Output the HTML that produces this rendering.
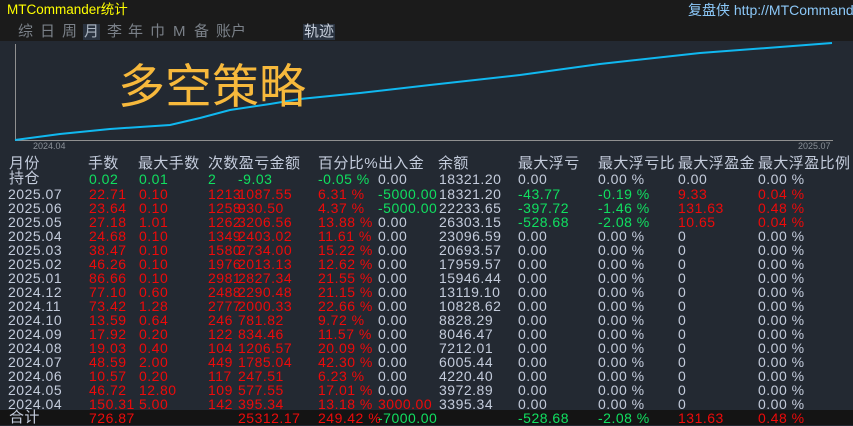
<!DOCTYPE html>
<html><head><meta charset="utf-8"><style>
html,body{margin:0;padding:0}
body{width:853px;height:425px;overflow:hidden;background:#232932;position:relative;font-family:"Liberation Sans","Noto Sans CJK SC",sans-serif;}
#top{position:absolute;left:0;top:0;width:853px;height:41px;background:#1b1b1b;}
.a{position:absolute;white-space:nowrap;}
.r{position:absolute;left:0;width:853px;height:14px;font-size:14px;line-height:14px;letter-spacing:0.5px}
.r span{position:absolute;top:0;white-space:nowrap}
.R{color:#ee0a0a}.G{color:#10e060}.W{color:#c4ccdc}
.h{color:#c4ccdc;font-size:15px;letter-spacing:0.4px}
.t{position:absolute;top:0}
</style></head><body>
<div id="top"></div>
<div class="a" style="left:7px;top:3px;font-size:13.5px;color:#ffff00;line-height:14px">MTCommander统计</div>
<div class="a" style="left:688px;top:3px;font-size:14px;color:#8cc8f8;line-height:14px">复盘侠 http://MTCommander</div>
<div class="a" style="left:0;top:24px;font-size:15px;color:#7a8088;line-height:16px;width:300px;height:16px">
<span class="t" style="left:18px">综</span><span class="t" style="left:40px">日</span><span class="t" style="left:62px">周</span><span class="t" style="left:83px;background:#2a3340;color:#aab4c0;padding:0 1px">月</span><span class="t" style="left:107px">李</span><span class="t" style="left:128px">年</span><span class="t" style="left:150px">巾</span><span class="t" style="left:173px">M</span><span class="t" style="left:194px">备</span><span class="t" style="left:216px">账户</span></div>
<div class="a" style="left:303px;top:24px;font-size:15px;color:#c8d0dc;background:#2a3340;line-height:16px;padding:0 1px">轨迹</div>
<svg class="a" style="left:0;top:41px" width="853" height="110">
<line x1="15.5" y1="3" x2="15.5" y2="100" stroke="#909090" stroke-width="1"/>
<line x1="15" y1="99.5" x2="833" y2="99.5" stroke="#909090" stroke-width="1"/>
<polyline fill="none" stroke="#10b8f0" stroke-width="2" points="15,99 60,93 110,88 170,84 200,77 230,69 270,63 300,58 360,52 430,44 520,34 600,23 700,12 780,6 832,2"/>
<text x="33" y="108" font-size="9" fill="#8a9098" font-family="Liberation Sans">2024.04</text>
<text x="798" y="108" font-size="9" fill="#8a9098" font-family="Liberation Sans">2025.07</text>
</svg>
<div class="a" style="left:118px;top:57px;font-size:47px;line-height:52px;color:#f7b93c;font-family:'Noto Sans CJK SC',sans-serif">多空策略</div>

<div class="r h" style="top:157px"><span style="left:9px">月份</span><span style="left:88px">手数</span><span style="left:138px">最大手数</span><span style="left:208px">次数盈亏金额</span><span style="left:318px">百分比%出入金</span><span style="left:438px">余额</span><span style="left:518px">最大浮亏</span><span style="left:598px">最大浮亏比</span><span style="left:678px">最大浮盈金</span><span style="left:758px">最大浮盈比例</span></div>
<div class="r" style="top:172px"><span class="h" style="left:9px">持仓</span><span class="G" style="left:89px">0.02</span><span class="G" style="left:139px">0.01</span><span class="G" style="left:208px">2</span><span class="G" style="left:238px">-9.03</span><span class="G" style="left:318px">-0.05 %</span><span class="W" style="left:378px">0.00</span><span class="W" style="left:439px">18321.20</span><span class="W" style="left:518px">0.00</span><span class="W" style="left:598px">0.00 %</span><span class="W" style="left:678px">0.00</span><span class="W" style="left:758px">0.00 %</span></div>

<div class="r" style="top:187px"><span class="W" style="left:8px">2025.07</span><span class="R" style="left:89px">22.71</span><span class="R" style="left:139px">0.10</span><span class="R" style="left:208px">1213</span><span class="R" style="left:238px">1087.55</span><span class="R" style="left:318px">6.31 %</span><span class="G" style="left:378px">-5000.00</span><span class="W" style="left:439px">18321.20</span><span class="G" style="left:518px">-43.77</span><span class="G" style="left:598px">-0.19 %</span><span class="R" style="left:678px">9.33</span><span class="R" style="left:758px">0.04 %</span></div>
<div class="r" style="top:201px"><span class="W" style="left:8px">2025.06</span><span class="R" style="left:89px">23.64</span><span class="R" style="left:139px">0.10</span><span class="R" style="left:208px">1258</span><span class="R" style="left:238px">930.50</span><span class="R" style="left:318px">4.37 %</span><span class="G" style="left:378px">-5000.00</span><span class="W" style="left:439px">22233.65</span><span class="G" style="left:518px">-397.72</span><span class="G" style="left:598px">-1.46 %</span><span class="R" style="left:678px">131.63</span><span class="R" style="left:758px">0.48 %</span></div>
<div class="r" style="top:215px"><span class="W" style="left:8px">2025.05</span><span class="R" style="left:89px">27.18</span><span class="R" style="left:139px">1.01</span><span class="R" style="left:208px">1262</span><span class="R" style="left:238px">3206.56</span><span class="R" style="left:318px">13.88 %</span><span class="W" style="left:378px">0.00</span><span class="W" style="left:439px">26303.15</span><span class="G" style="left:518px">-528.68</span><span class="G" style="left:598px">-2.08 %</span><span class="R" style="left:678px">10.65</span><span class="R" style="left:758px">0.04 %</span></div>
<div class="r" style="top:229px"><span class="W" style="left:8px">2025.04</span><span class="R" style="left:89px">24.68</span><span class="R" style="left:139px">0.10</span><span class="R" style="left:208px">1349</span><span class="R" style="left:238px">2403.02</span><span class="R" style="left:318px">11.61 %</span><span class="W" style="left:378px">0.00</span><span class="W" style="left:439px">23096.59</span><span class="W" style="left:518px">0.00</span><span class="W" style="left:598px">0.00 %</span><span class="W" style="left:678px">0</span><span class="W" style="left:758px">0.00 %</span></div>
<div class="r" style="top:243px"><span class="W" style="left:8px">2025.03</span><span class="R" style="left:89px">38.47</span><span class="R" style="left:139px">0.10</span><span class="R" style="left:208px">1580</span><span class="R" style="left:238px">2734.00</span><span class="R" style="left:318px">15.22 %</span><span class="W" style="left:378px">0.00</span><span class="W" style="left:439px">20693.57</span><span class="W" style="left:518px">0.00</span><span class="W" style="left:598px">0.00 %</span><span class="W" style="left:678px">0</span><span class="W" style="left:758px">0.00 %</span></div>
<div class="r" style="top:257px"><span class="W" style="left:8px">2025.02</span><span class="R" style="left:89px">46.26</span><span class="R" style="left:139px">0.10</span><span class="R" style="left:208px">1976</span><span class="R" style="left:238px">2013.13</span><span class="R" style="left:318px">12.62 %</span><span class="W" style="left:378px">0.00</span><span class="W" style="left:439px">17959.57</span><span class="W" style="left:518px">0.00</span><span class="W" style="left:598px">0.00 %</span><span class="W" style="left:678px">0</span><span class="W" style="left:758px">0.00 %</span></div>
<div class="r" style="top:271px"><span class="W" style="left:8px">2025.01</span><span class="R" style="left:89px">86.66</span><span class="R" style="left:139px">0.10</span><span class="R" style="left:208px">2981</span><span class="R" style="left:238px">2827.34</span><span class="R" style="left:318px">21.55 %</span><span class="W" style="left:378px">0.00</span><span class="W" style="left:439px">15946.44</span><span class="W" style="left:518px">0.00</span><span class="W" style="left:598px">0.00 %</span><span class="W" style="left:678px">0</span><span class="W" style="left:758px">0.00 %</span></div>
<div class="r" style="top:285px"><span class="W" style="left:8px">2024.12</span><span class="R" style="left:89px">77.10</span><span class="R" style="left:139px">0.60</span><span class="R" style="left:208px">2488</span><span class="R" style="left:238px">2290.48</span><span class="R" style="left:318px">21.15 %</span><span class="W" style="left:378px">0.00</span><span class="W" style="left:439px">13119.10</span><span class="W" style="left:518px">0.00</span><span class="W" style="left:598px">0.00 %</span><span class="W" style="left:678px">0</span><span class="W" style="left:758px">0.00 %</span></div>
<div class="r" style="top:299px"><span class="W" style="left:8px">2024.11</span><span class="R" style="left:89px">73.42</span><span class="R" style="left:139px">1.28</span><span class="R" style="left:208px">2777</span><span class="R" style="left:238px">2000.33</span><span class="R" style="left:318px">22.66 %</span><span class="W" style="left:378px">0.00</span><span class="W" style="left:439px">10828.62</span><span class="W" style="left:518px">0.00</span><span class="W" style="left:598px">0.00 %</span><span class="W" style="left:678px">0</span><span class="W" style="left:758px">0.00 %</span></div>
<div class="r" style="top:313px"><span class="W" style="left:8px">2024.10</span><span class="R" style="left:89px">13.59</span><span class="R" style="left:139px">0.64</span><span class="R" style="left:208px">246</span><span class="R" style="left:238px">781.82</span><span class="R" style="left:318px">9.72 %</span><span class="W" style="left:378px">0.00</span><span class="W" style="left:439px">8828.29</span><span class="W" style="left:518px">0.00</span><span class="W" style="left:598px">0.00 %</span><span class="W" style="left:678px">0</span><span class="W" style="left:758px">0.00 %</span></div>
<div class="r" style="top:327px"><span class="W" style="left:8px">2024.09</span><span class="R" style="left:89px">17.92</span><span class="R" style="left:139px">0.20</span><span class="R" style="left:208px">122</span><span class="R" style="left:238px">834.46</span><span class="R" style="left:318px">11.57 %</span><span class="W" style="left:378px">0.00</span><span class="W" style="left:439px">8046.47</span><span class="W" style="left:518px">0.00</span><span class="W" style="left:598px">0.00 %</span><span class="W" style="left:678px">0</span><span class="W" style="left:758px">0.00 %</span></div>
<div class="r" style="top:341px"><span class="W" style="left:8px">2024.08</span><span class="R" style="left:89px">19.03</span><span class="R" style="left:139px">0.40</span><span class="R" style="left:208px">104</span><span class="R" style="left:238px">1206.57</span><span class="R" style="left:318px">20.09 %</span><span class="W" style="left:378px">0.00</span><span class="W" style="left:439px">7212.01</span><span class="W" style="left:518px">0.00</span><span class="W" style="left:598px">0.00 %</span><span class="W" style="left:678px">0</span><span class="W" style="left:758px">0.00 %</span></div>
<div class="r" style="top:355px"><span class="W" style="left:8px">2024.07</span><span class="R" style="left:89px">48.59</span><span class="R" style="left:139px">2.00</span><span class="R" style="left:208px">449</span><span class="R" style="left:238px">1785.04</span><span class="R" style="left:318px">42.30 %</span><span class="W" style="left:378px">0.00</span><span class="W" style="left:439px">6005.44</span><span class="W" style="left:518px">0.00</span><span class="W" style="left:598px">0.00 %</span><span class="W" style="left:678px">0</span><span class="W" style="left:758px">0.00 %</span></div>
<div class="r" style="top:369px"><span class="W" style="left:8px">2024.06</span><span class="R" style="left:89px">10.57</span><span class="R" style="left:139px">0.20</span><span class="R" style="left:208px">117</span><span class="R" style="left:238px">247.51</span><span class="R" style="left:318px">6.23 %</span><span class="W" style="left:378px">0.00</span><span class="W" style="left:439px">4220.40</span><span class="W" style="left:518px">0.00</span><span class="W" style="left:598px">0.00 %</span><span class="W" style="left:678px">0</span><span class="W" style="left:758px">0.00 %</span></div>
<div class="r" style="top:383px"><span class="W" style="left:8px">2024.05</span><span class="R" style="left:89px">46.72</span><span class="R" style="left:139px">12.80</span><span class="R" style="left:208px">109</span><span class="R" style="left:238px">577.55</span><span class="R" style="left:318px">17.01 %</span><span class="W" style="left:378px">0.00</span><span class="W" style="left:439px">3972.89</span><span class="W" style="left:518px">0.00</span><span class="W" style="left:598px">0.00 %</span><span class="W" style="left:678px">0</span><span class="W" style="left:758px">0.00 %</span></div>
<div class="r" style="top:397px"><span class="W" style="left:8px">2024.04</span><span class="R" style="left:89px">150.31</span><span class="R" style="left:139px">5.00</span><span class="R" style="left:208px">142</span><span class="R" style="left:238px">395.34</span><span class="R" style="left:318px">13.18 %</span><span class="R" style="left:378px">3000.00</span><span class="W" style="left:439px">3395.34</span><span class="W" style="left:518px">0.00</span><span class="W" style="left:598px">0.00 %</span><span class="W" style="left:678px">0</span><span class="W" style="left:758px">0.00 %</span></div>
<div class="a" style="left:0;top:410px;width:853px;height:15px;background:#141414"></div>
<div class="r" style="top:411px"><span class="h" style="left:9px">合计</span><span class="R" style="left:89px">726.87</span><span class="R" style="left:238px">25312.17</span><span class="R" style="left:318px">249.42 %</span><span class="G" style="left:378px">-7000.00</span><span class="G" style="left:518px">-528.68</span><span class="G" style="left:598px">-2.08 %</span><span class="R" style="left:678px">131.63</span><span class="R" style="left:758px">0.48 %</span></div>
</body></html>
